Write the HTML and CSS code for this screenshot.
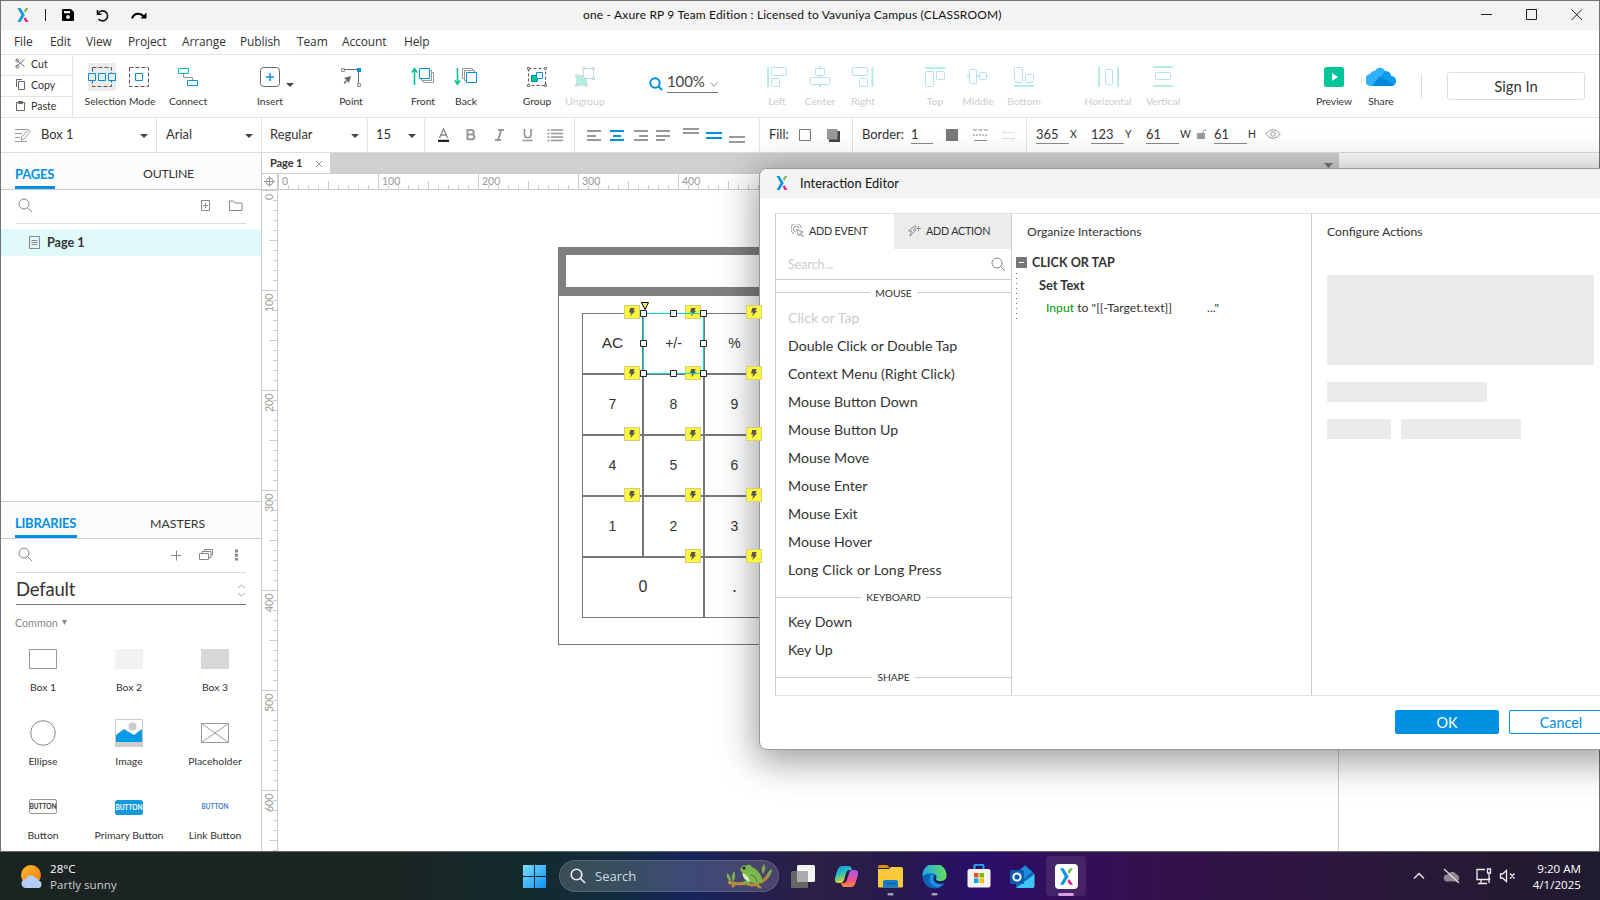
FILE: index.html
```html
<!DOCTYPE html>
<html lang="en">
<head>
<meta charset="utf-8">
<title>one - Axure RP 9 Team Edition</title>
<link rel="stylesheet" href="styles.css">
</head>
<body>
<svg class="defs" width="0" height="0">
  <symbol id="logo" viewBox="0 0 14 16"><path d="M1.5 1h3l4.3 7-4.3 7h-3l4-7z" fill="#1296db"/><path d="M12.5 1l-3.3 4.800-1.400-2L10 1z" fill="#7ab648"/><path d="M9.200 10l3.300 5H9.800L7.800 12z" fill="#ec1685"/></symbol>
  <symbol id="search" viewBox="0 0 15 15"><circle cx="6" cy="6" r="5" fill="none" stroke="currentColor"/><path d="M9.800 9.800L14 14" stroke="currentColor" fill="none"/></symbol>
  <symbol id="bolt" viewBox="0 0 16 14"><rect x=".5" y=".5" width="15" height="13" fill="#fdf63f" stroke="#d3cf7c"/><path d="M6.300 3h4.400L9.300 5.800h2L6.200 11.200l1-3.700H5z" fill="#555"/></symbol>
</svg>
<div class="app">
  <header class="titlebar">
    <svg class="t-logo" width="14" height="16"><use href="#logo"/></svg>
    <i class="t-bar"></i>
    <svg class="t-save" width="12" height="12" viewBox="0 0 12 12"><path d="M1 0h8l3 3v8a1 1 0 0 1-1 1H1a1 1 0 0 1-1-1V1a1 1 0 0 1 1-1z"/><rect x="2" y="2" width="6" height="2.300" fill="#f3f3f3"/><circle cx="6" cy="8" r="1.900" fill="#f3f3f3"/></svg>
    <svg class="t-undo" width="13" height="13" viewBox="0 0 13 13"><path d="M1.500 1v4.200h4M2 4.800A5 5 0 1 1 2.600 10" fill="none" stroke="#111" stroke-width="1.600"/></svg>
    <svg class="t-redo" width="16" height="10" viewBox="0 0 16 10"><path d="M1 8.500C3 3 9 2 13 6.500" fill="none" stroke="#000" stroke-width="2"/><path d="M15.500 2.500V8.500H9.500z"/></svg>
    <span class="t-title">one - Axure RP 9 Team Edition : Licensed to Vavuniya Campus (CLASSROOM)</span>
    <svg class="t-win" width="102" height="12" viewBox="0 0 102 12" fill="none" stroke="#222"><path d="M0 5.500h11M45.500.500h10v10h-10zM90.500.500l10.500 10.500M101 .500L90.500 11"/></svg>
  </header>
  <nav class="menubar"><span>File</span><span>Edit</span><span>View</span><span>Project</span><span>Arrange</span><span>Publish</span><span>Team</span><span>Account</span><span>Help</span></nav>

  <div class="toolbar">
    <div class="clip">
      <div><svg width="12" height="12" viewBox="0 0 12 12" fill="none" stroke="#777"><path d="M1 1.500l8.500 7M1 9l8.500-7.500"/><circle cx="2.300" cy="2.500" r="1.500"/><circle cx="2.300" cy="8.500" r="1.500"/></svg>Cut</div>
      <div><svg width="12" height="12" viewBox="0 0 12 12" fill="none" stroke="#666"><path d="M3.500 2.500h6v8h-6zM1.500 8V.500H7"/></svg>Copy</div>
      <div><svg width="12" height="12" viewBox="0 0 12 12" fill="none" stroke="#666"><path d="M1.500 2.500h8v8h-8zM3.500 1.500h4v2h-4z"/></svg>Paste</div>
    </div>
    <div class="tool sel"><div class="pair">
      <svg class="on" width="28" height="28" viewBox="0 0 28 28" fill="none"><path d="M4.500 4.500h19v19h-19z" stroke="#555" stroke-dasharray="4 2"/><path d="M.500 10.500h7v7h-7zM10.500 10.500h7v7h-7zM20.500 10.500h7v7h-7z" stroke="#0090e3" fill="#ececec"/></svg>
      <svg width="22" height="28" viewBox="0 0 22 28" fill="none"><path d="M1.500 4.500h19v19h-19z" stroke="#555" stroke-dasharray="4 2"/><path d="M7.500 10.500h7v7h-7z" stroke="#0090e3"/></svg></div><span>Selection Mode</span></div>
    <div class="tool connect"><svg width="22" height="28" viewBox="0 0 22 28" fill="none"><path d="M1.500 5.500h10v5h-10z" stroke="#00c49a"/><path d="M6.500 11v3.500h9V17" stroke="#999"/><path d="M10.500 17.500h10v5h-10z" stroke="#0090e3"/></svg><span>Connect</span></div>
    <div class="tool insert"><svg width="40" height="28" viewBox="0 0 40 28" fill="none"><rect x="10.500" y="4.500" width="19" height="19" rx="3" stroke="#666"/><path d="M20 10v8M16 14h8" stroke="#0090e3" stroke-width="1.500"/></svg><i class="caret"></i><span>Insert</span></div>
    <div class="tool point"><svg width="22" height="28" viewBox="0 0 22 28" fill="none"><path d="M4 6.500h14.500V21" stroke="#666"/><path d="M1.500 5.500h3v3h-3zM17.500 20.500h3v3h-3z" stroke="#999" fill="#ddd"/><rect x="17" y="5" width="4" height="4" fill="#0090e3"/><path d="M11 13l-2 7-2-2.200L5 21l-1.500-1.500L6.500 17 4 15z" fill="#666"/></svg><span>Point</span></div>
    <div class="tool front"><svg width="24" height="28" viewBox="0 0 24 28" fill="none"><path d="M12.500 9.500h10v10h-10z" fill="#fff" stroke="#999"/><path d="M10.500 7.500h10v10h-10z" fill="#fff" stroke="#999"/><path d="M8.500 5.500h10v10h-10z" fill="#fff" stroke="#0090e3"/><path d="M3.500 7v15M1 9.500l2.500-3.700L6 9.500" stroke="#00c49a" stroke-width="1.600"/></svg><span>Front</span></div>
    <div class="tool back"><svg width="24" height="28" viewBox="0 0 24 28" fill="none"><path d="M8.500 5.500h10v10h-10z" fill="#fff" stroke="#999"/><path d="M10.500 7.500h10v10h-10z" fill="#fff" stroke="#999"/><path d="M12.500 9.500h10v10h-10z" fill="#fff" stroke="#0090e3"/><path d="M3.500 5v15M1 17.500l2.500 3.700L6 17.500" stroke="#00c49a" stroke-width="1.600"/></svg><span>Back</span></div>
    <div class="tool group"><svg width="22" height="28" viewBox="0 0 22 28" fill="none"><path d="M2.500 5.500h17v17h-17z" stroke="#555" stroke-dasharray="3 2"/><path d="M5 12h6v6H5z" fill="#00c49a"/><path d="M5.500 12.500h6v6h-6z" stroke="#0090a0"/><path d="M10.500 9.500h6v6h-6z" fill="#fff" stroke="#0090e3"/><path d="M1.500 4.500h2v2h-2zM18.500 4.500h2v2h-2zM1.500 21.500h2v2h-2zM18.500 21.500h2v2h-2z" fill="#fff" stroke="#777"/></svg><span>Group</span></div>
    <div class="tool ungroup dim"><svg width="22" height="28" viewBox="0 0 22 28" fill="none"><path d="M2 12h11v11H2z" fill="#b3eee1"/><path d="M9.500 5.500h10v10h-10z" fill="#fff" stroke="#b3dff8"/><path d="M8.500 4.500h2v2h-2zM18.500 4.500h2v2h-2zM8.500 14.500h2v2h-2zM18.500 14.500h2v2h-2zM1.500 11.500h2v2h-2zM1.500 21.500h2v2h-2zM11.500 21.500h2v2h-2z" fill="#fff" stroke="#d2d2d2"/></svg><span>Ungroup</span></div>
    <div class="zoombox"><svg width="14" height="14" viewBox="0 0 14 14" fill="none" stroke="#0090e3" stroke-width="2"><circle cx="6" cy="6" r="4.700"/><path d="M9.500 9.500L13 13"/></svg><div class="pct">100%<svg width="8" height="5" viewBox="0 0 8 5" fill="none" stroke="#bbb" stroke-width="1.400"><path d="M.500.500L4 4 7.500.500"/></svg></div></div>
    <div class="tool left dim"><svg width="22" height="28" viewBox="0 0 22 28" fill="none" stroke="#b3dff8"><path d="M2 4v20" stroke="#b3eee1" stroke-width="2"/><rect x="5.500" y="4.500" width="15" height="8" rx="1"/><rect x="5.500" y="15.500" width="8" height="8" rx="1"/></svg><span>Left</span></div>
    <div class="tool near dim"><svg width="22" height="28" viewBox="0 0 22 28" fill="none" stroke="#b3dff8"><path d="M11 3v21" stroke="#b3eee1" stroke-width="2"/><rect x="6.500" y="5.500" width="9" height="7" rx="1" fill="#fff"/><rect x="1.500" y="14.500" width="19" height="7" rx="1" fill="#fff"/></svg><span>Center</span></div>
    <div class="tool near dim"><svg width="22" height="28" viewBox="0 0 22 28" fill="none" stroke="#b3dff8"><path d="M20.500 4v20" stroke="#b3eee1" stroke-width="2"/><rect x=".5" y="4.500" width="15" height="8" rx="1"/><rect x="7.500" y="15.500" width="8" height="8" rx="1"/></svg><span>Right</span></div>
    <div class="tool top dim"><svg width="22" height="28" viewBox="0 0 22 28" fill="none" stroke="#b3dff8"><path d="M1 5h20" stroke="#b3eee1" stroke-width="2"/><rect x="1.500" y="8.500" width="8" height="15" rx="1"/><rect x="12.500" y="8.500" width="8" height="8" rx="1"/></svg><span>Top</span></div>
    <div class="tool near dim"><svg width="22" height="28" viewBox="0 0 22 28" fill="none" stroke="#b3dff8"><path d="M0 13h21" stroke="#b3eee1" stroke-width="2"/><rect x="2.500" y="6.500" width="7" height="14" rx="1" fill="#fff"/><rect x="12.500" y="9.500" width="7" height="7" rx="1" fill="#fff"/></svg><span>Middle</span></div>
    <div class="tool bottom dim"><svg width="22" height="28" viewBox="0 0 22 28" fill="none" stroke="#b3dff8"><path d="M1 23h20" stroke="#b3eee1" stroke-width="2"/><rect x="1.500" y="4.500" width="8" height="15" rx="1"/><rect x="12.500" y="11.500" width="8" height="8" rx="1"/></svg><span>Bottom</span></div>
    <div class="tool horiz dim"><svg width="22" height="28" viewBox="0 0 22 28" fill="none" stroke="#b3dff8"><path d="M2 4v20M21 4v20" stroke="#b3eee1" stroke-width="2"/><rect x="8.500" y="6.500" width="7" height="15" rx="1"/></svg><span>Horizontal</span></div>
    <div class="tool vert dim"><svg width="22" height="28" viewBox="0 0 22 28" fill="none" stroke="#b3dff8"><path d="M1 4h20M1 23h20" stroke="#b3eee1" stroke-width="2"/><rect x="3.500" y="9.500" width="15" height="7" rx="1"/></svg><span>Vertical</span></div>
    <div class="tool preview"><svg width="20" height="28" viewBox="0 0 20 28"><rect y="4" width="20" height="20" rx="2.500" fill="#00c49a"/><path d="M8 10l6 4-6 4z" fill="#fff"/></svg><span>Preview</span></div>
    <div class="tool share"><svg width="30" height="28" viewBox="0 0 30 28"><path d="M6 23a6 6 0 0 1-2-12 5 5 0 0 1 5-3 5.500 5.500 0 0 1 10 0 5 5 0 0 1 6 5 5 5 0 0 1 0 10z" fill="#2fb1ff"/><path d="M7 23l7-9 5-5.500a5 5 0 0 1 6 4.500 5 5 0 0 1 0 10z" fill="#0d9bea"/><path d="M6 23l7.500-9.500L28.500 22q-1 1-3.500 1z" fill="#0089dc"/></svg><span>Share</span></div>
    <i class="t-div"></i>
    <div class="signin">Sign In</div>
  </div>

  <div class="format">
    <div class="f-style"><svg width="16" height="14" viewBox="0 0 16 14" fill="none" stroke="#999"><path d="M0 1.500h13M0 5.500h7M0 9.500h5M0 13.500h12M6 12l1-3.500 6.500-6.500 2 1.500L9 11z"/></svg><b>Box 1</b><i class="caret"></i></div>
    <div class="f-font"><b>Arial</b><i class="caret"></i></div>
    <div class="f-weight"><b>Regular</b><i class="caret"></i></div>
    <div class="f-size"><b>15</b><i class="caret"></i></div>
    <div class="f-text">
      <svg width="126" height="14" viewBox="0 0 126 14"><path d="M0 13h11" stroke="#222" stroke-width="2.500"/><path d="M1.500 10L5.500.800 9.500 10M3 7h5" fill="none" stroke="#888" stroke-width="1.300"/><path d="M29.500 1v11M29.500 2h4a2.200 2.200 0 0 1 0 4.500h-4 4.500a2.200 2.200 0 0 1 0 4.700h-4.500" fill="none" stroke="#999" stroke-width="2"/><path d="M60 2h6M57 12h6M63.300 2L60 12" fill="none" stroke="#999" stroke-width="2"/><path d="M86.500 1v5.500a3 3 0 0 0 6.500 0V1M84.500 12.500h10" fill="none" stroke="#999" stroke-width="1.700"/><path d="M113 2h12M113 5.500h12M113 9h12M113 12.500h12" stroke="#999" stroke-width="1.500"/><path d="M109.500 2h2M109.500 5.500h2M109.500 9h2M109.500 12.500h2" stroke="#999" stroke-width="1.500"/></svg>
    </div>
    <div class="f-align">
      <svg width="159" height="16" viewBox="0 0 159 16" fill="none" stroke="#999" stroke-width="2"><path d="M0 4h14M0 9h9M0 13h14M47 4h14M52 9h9M47 13h14M69 4h14M69 9h14M69 13h9M96 2h16M96 6h16M142 10h16M142 15h16"/><path d="M23 4h14M26 9h8M23 13h14M119 6h16M119 11h16" stroke="#0090e3"/></svg>
    </div>
    <div class="f-fill"><span>Fill:</span><svg width="42" height="13" viewBox="0 0 42 13"><path d="M.500.500h11v11H.500z" fill="#fff" stroke="#777"/><path d="M30 2h11v11H30z" fill="#444"/><path d="M28 0h10.500v10.500H28z" fill="#999"/></svg></div>
    <div class="f-border"><span>Border:</span><u class="short">1</u><svg width="70" height="14" viewBox="0 0 70 14" fill="none"><path d="M0 1h12v12H0z" fill="#777"/><path d="M27 2h15" stroke="#888" stroke-dasharray="4 1.500"/><path d="M27 7h15" stroke="#888" stroke-dasharray="2 1"/><path d="M28 12.500h13" stroke="#888"/><path d="M69 4.500H56.500l3-3M56 10.500h12.500l-3 3" stroke="#ddd"/></svg></div>
    <div class="f-pos"><u>365</u><em>X</em><u>123</u><em>Y</em><u>61</u><em class="w">W</em><svg class="lock" width="10" height="12" viewBox="0 0 10 12"><path d="M0 5h8v6H0z" fill="#999"/><path d="M6 5V3a2 2 0 0 1 3.500 0" fill="none" stroke="#999"/></svg><u>61</u><em>H</em><svg width="16" height="10" viewBox="0 0 16 10" fill="none" stroke="#999"><path d="M.700 5Q4 .600 8 .600T15.300 5Q12 9.400 8 9.400T.700 5z"/><circle cx="8" cy="5" r="2.300"/></svg></div>
  </div>

  <div class="main">
    <aside class="side">
      <section class="pages">
        <div class="tabs"><b class="t-pages">PAGES</b><span class="t-outline">OUTLINE</span></div>
        <div class="finder"><svg width="15" height="15"><use href="#search"/></svg><svg class="push" width="42" height="12" viewBox="0 0 42 12" fill="none" stroke="#888"><path d="M.500.500h8v10h-8zM4.500 3v5M2 5.500h5M28.500 1h4l1.500 2h7v7.500H28.500z"/></svg></div>
        <div class="page-row"><svg width="11" height="13" viewBox="0 0 11 13" fill="none" stroke="#888"><path d="M.500.500h10v12H.500zM2.500 4.500h6M2.500 6.500h6M2.500 8.500h6"/></svg><b>Page 1</b></div>
      </section>
      <section class="libs">
        <div class="tabs"><b class="t-libs">LIBRARIES</b><span class="t-masters">MASTERS</span></div>
        <div class="finder"><svg width="15" height="15"><use href="#search"/></svg><svg class="push2" width="68" height="12" viewBox="0 0 68 12" fill="none" stroke="#888"><path d="M0 6.500h10M5.500 1.500v10M28.500 4.500h9v6h-9zM31 4V2.500h9V8.500h-2M33.500 2V.500h8V6H40"/><path d="M65.500.500v11" stroke-width="3" stroke-dasharray="3 1.300"/></svg></div>
        <div class="lib-select"><span>Default</span><svg width="9" height="13" viewBox="0 0 9 13" fill="none" stroke="#aaa"><path d="M1 4l3.500-3L8 4M1 9l3.500 3L8 9"/></svg></div>
        <div class="common">Common <svg width="5" height="5" viewBox="0 0 5 5"><path d="M0 0h5L2.500 5z" fill="#888"/></svg></div>
        <div class="widgets">
          <div><svg width="28" height="28" viewBox="0 0 28 28"><path d="M.500 4.500h27v19H.500z" fill="#fff" stroke="#999"/></svg>Box 1</div>
          <div><svg width="28" height="28" viewBox="0 0 28 28"><path d="M0 4h28v20H0z" fill="#f2f2f2"/></svg>Box 2</div>
          <div><svg width="28" height="28" viewBox="0 0 28 28"><path d="M0 4h28v20H0z" fill="#d7d7d7"/></svg>Box 3</div>
          <div><svg width="28" height="28" viewBox="0 0 28 28"><circle cx="14" cy="14" r="12.300" fill="#fff" stroke="#888"/></svg>Ellipse</div>
          <div><svg width="28" height="28" viewBox="0 0 28 28"><path d="M.500.500h27v27H.500z" fill="#fff" stroke="#ccc"/><path d="M0 23h28v5H0z" fill="#ccc"/><circle cx="17.500" cy="7.500" r="4" fill="#ccc"/><path d="M1 16l8-6 10 6 8-6v13H1z" fill="#039be5"/></svg>Image</div>
          <div><svg width="28" height="28" viewBox="0 0 28 28"><path d="M.500 4.500h27v19H.500zM.500 4.500l27 19M27.500 4.500L.500 23.500" fill="none" stroke="#999"/></svg>Placeholder</div>
          <div><svg width="28" height="28" viewBox="0 0 28 28"><rect x=".5" y="6.500" width="27" height="14" rx="1.500" fill="#fff" stroke="#999"/><text x="14" y="16" fill="#333">BUTTON</text></svg>Button</div>
          <div><svg width="28" height="28" viewBox="0 0 28 28"><rect y="7" width="28" height="15" rx="2.500" fill="#1599da"/><text x="14" y="17" fill="#fff">BUTTON</text></svg>Primary Button</div>
          <div><svg width="28" height="28" viewBox="0 0 28 28"><text x="14" y="16" fill="#3d7fc4">BUTTON</text></svg>Link Button</div>
        </div>
      </section>
    </aside>

    <section class="work">
      <div class="tabstrip"><div class="tab"><b>Page 1</b><svg width="8" height="8" viewBox="0 0 8 8" stroke="#999"><path d="M1 1l6 6M7 1L1 7"/></svg></div><svg class="drop" width="9" height="5" viewBox="0 0 9 5"><path d="M0 0h9L4.500 5z" fill="#777"/></svg></div>
      <div class="hrow">
        <div class="corner"><svg width="11" height="11" viewBox="0 0 11 11" fill="none" stroke="#999"><circle cx="5.500" cy="5.500" r="3.500"/><path d="M5.500 0v11M0 5.500h11"/></svg></div>
        <div class="hruler"><span>0</span><span>100</span><span>200</span><span>300</span><span>400</span></div>
      </div>
      <div class="crow">
        <div class="vruler"><span>0</span><span>100</span><span>200</span><span>300</span><span>400</span><span>500</span><span>600</span></div>
        <div class="canvas">
          <div class="calc">
            <div class="display"></div>
            <div class="keys">
              <div class="ac">AC<svg><use href="#bolt"/></svg></div><div class="picked">+/-<svg><use href="#bolt"/></svg></div><div>%<svg><use href="#bolt"/></svg></div>
              <div>7<svg><use href="#bolt"/></svg></div><div>8<svg><use href="#bolt"/></svg></div><div>9<svg><use href="#bolt"/></svg></div>
              <div>4<svg><use href="#bolt"/></svg></div><div>5<svg><use href="#bolt"/></svg></div><div>6<svg><use href="#bolt"/></svg></div>
              <div>1<svg><use href="#bolt"/></svg></div><div>2<svg><use href="#bolt"/></svg></div><div>3<svg><use href="#bolt"/></svg></div>
              <div class="zero">0<svg><use href="#bolt"/></svg></div><div class="dot">.<svg><use href="#bolt"/></svg></div>
              <svg class="handles" viewBox="0 0 70 80" fill="#fff" stroke="#222"><path d="M4.500 15.500h60v60h-60z" fill="none" stroke="#00d8d8"/><path d="M1.500 12.500h6v6h-6zM31.500 12.500h6v6h-6zM61.500 12.500h6v6h-6zM1.500 42.500h6v6h-6zM61.500 42.500h6v6h-6zM1.500 72.500h6v6h-6zM31.500 72.500h6v6h-6zM61.500 72.500h6v6h-6z"/><path d="M2.500 4.500h7L6 11.500z" fill="#fdf63f" stroke="#000"/></svg>
            </div>
          </div>
        </div>
      </div>
    </section>
    <aside class="inspector"></aside>
  </div>
</div>

<div class="dialog">
  <div class="d-title"><svg width="14" height="16"><use href="#logo"/></svg><span>Interaction Editor</span></div>
  <div class="d-body">
    <div class="events">
      <div class="e-tabs">
        <div class="e-on"><svg width="13" height="13" viewBox="0 0 13 13" fill="none" stroke="#888" stroke-width=".9"><path d="M3.500 9.800A5.200 5.200 0 1 1 10.300 4M4.500 8A3 3 0 1 1 8.200 4.500M5.500 5.500l6.500 2.300-2.600 1.200 3 3-.8.800-3-3L7.500 12z"/></svg>ADD EVENT</div>
        <div class="e-off"><svg width="13" height="12" viewBox="0 0 13 12" fill="none" stroke="#888" stroke-width=".9"><path d="M6.500 1L.500 6h3l-1.500 5 6-6H5.500L8 1zM8 3.500h5M10.500 1v5"/></svg>ADD ACTION</div>
      </div>
      <div class="e-search"><span>Search...</span><svg width="15" height="15"><use href="#search"/></svg></div>
      <div class="e-head first">MOUSE</div>
      <p class="off">Click or Tap</p><p>Double Click or Double Tap</p><p>Context Menu (Right Click)</p><p>Mouse Button Down</p><p>Mouse Button Up</p><p>Mouse Move</p><p>Mouse Enter</p><p>Mouse Exit</p><p>Mouse Hover</p><p class="wide">Long Click or Long Press</p>
      <div class="e-head">KEYBOARD</div>
      <p>Key Down</p><p>Key Up</p>
      <div class="e-head">SHAPE</div>
    </div>
    <div class="organize">
      <h4>Organize Interactions</h4>
      <div class="o-event"><i></i><b>CLICK OR TAP</b></div>
      <div class="o-kids"><b>Set Text</b><div><span class="green">Input</span> to "[[-Target.text]]<span class="gap">..."</span></div></div>
    </div>
    <div class="configure">
      <h4>Configure Actions</h4>
      <div class="ph big"></div><div class="ph mid"></div><div class="ph-row"><div class="ph a"></div><div class="ph b"></div></div>
    </div>
  </div>
  <div class="d-foot"><div class="ok">OK</div><div class="cancel">Cancel</div></div>
</div>

<footer class="taskbar">
  <svg class="sun" width="24" height="25" viewBox="0 0 24 25"><defs><linearGradient id="s" x2="1" y2="1"><stop stop-color="#fcc02c"/><stop offset="1" stop-color="#f0700c"/></linearGradient></defs><circle cx="11" cy="11" r="10" fill="url(#s)"/><path d="M6 24a4.500 4.500 0 0 1 0-9 5 5 0 0 1 9-1.500 5 5 0 0 1 4 3 4 4 0 0 1 0 7.500z" fill="#b5cdf5"/></svg>
  <div class="weather"><span>28°C</span><span>Partly sunny</span></div>
  <svg class="win" width="23" height="23" viewBox="0 0 23 23"><defs><linearGradient id="w" x2="1" y2="1"><stop stop-color="#7fdcff"/><stop offset="1" stop-color="#0a91f5"/></linearGradient></defs><path d="M0 0h11v11H0zM12 0h11v11H12zM0 12h11v11H0zM12 12h11v11H12z" fill="url(#w)"/></svg>
  <div class="pill"><svg width="16" height="16" viewBox="0 0 16 16" fill="none" stroke="#eee" stroke-width="1.600"><circle cx="6.500" cy="6.500" r="5.300"/><path d="M10.500 10.500l4.500 4.500"/></svg><span>Search</span>
    <svg class="frog" width="48" height="26" viewBox="0 0 48 26"><path d="M2 19q8 3 17 1 8 4 14 0 7-3 10-9" fill="none" stroke="#b98a3c" stroke-width="3"/><path d="M29 21l6 4M10 20l-4 4" stroke="#b98a3c" stroke-width="2.500"/><path d="M1 10q4 2 4 9Q0 16 1 10zM8 8q3 5-1 11-3-5 1-11zM38 1q3 5-1 10-3-5 1-10zM46 6q0 6-5 8 0-6 5-8z" fill="#7cab4a"/><path d="M15 5q2-4 5-2 4-3 6 1 7 3 10 11 1 5-4 5-4 1-8-1l-4 3-3-1 3-4q-4-5-4-8-3-2-1-4z" fill="#7cb84c"/><path d="M17 10q6 3 7 9l-4-2q-4-3-3-7z" fill="#dce8b4"/><path d="M25 12q5 1 6 7M21 20l-3 3M33 20l4 1" stroke="#3f7f2c" fill="none"/><circle cx="18" cy="5" r="1.500" fill="#222"/></svg></div>
  <svg class="tv" width="24" height="23" viewBox="0 0 24 23"><rect y="6" width="17" height="17" rx="1.500" fill="#666"/><rect x="6" width="18" height="17" rx="1.500" fill="#f4f4f4"/><path d="M6 6h11v11H6z" fill="#aaa"/></svg>
  <svg class="cp" width="23" height="23" viewBox="0 0 23 23"><defs><linearGradient id="c1" x2=".4" y2="1"><stop stop-color="#1b8df0"/><stop offset=".5" stop-color="#27c1b8"/><stop offset="1" stop-color="#f5d22c"/></linearGradient><linearGradient id="c2" x2="0" y2="1"><stop stop-color="#a259f0"/><stop offset=".6" stop-color="#f0508e"/><stop offset="1" stop-color="#fa8f38"/></linearGradient></defs><path d="M7 1h7q2 0 3 4h-3q-2 0-3 3l-2 7q-1 3-3 3H3q-4 0-3-5l2.500-8Q4 1 7 1z" fill="url(#c1)"/><path d="M16 22H9q-2 0-3-4h3q2 0 3-3l2-7q1-3 3-3h3q4 0 3 5l-2.500 8Q19 22 16 22z" fill="url(#c2)"/></svg>
  <svg class="fe run" width="25" height="32" viewBox="0 0 25 32"><path d="M0 2q0-2 2-2h7l3 3H0z" fill="#d9920f"/><path d="M0 4h11l2-2h10q2 0 2 2v17q0 1.500-2 1.500H2Q0 22.500 0 21z" fill="#fbc93a"/><path d="M5 22.500V17q0-2 2-2h11q2 0 2 2v5.500z" fill="#117cc9"/><path d="M8 18.500h9" stroke="#075a9c"/><rect x="9.500" y="28" width="6" height="2.500" rx="1.200" fill="#a59ab8"/></svg>
  <svg class="ed run" width="25" height="32" viewBox="0 0 25 32"><defs><linearGradient id="e" x2="1"><stop stop-color="#1fa7e8"/><stop offset="1" stop-color="#66e05a"/></linearGradient></defs><circle cx="12.500" cy="11.500" r="12" fill="#0d62b8"/><path d="M.500 11A12 12 0 0 1 24.500 10q0 6-6 6.500-6 0-4-3 1-4-3-5-6-1-11 2.500z" fill="url(#e)"/><path d="M9 9q-4 7 2 12 6 3 11-2-3 1-7 0-6-3-3-9z" fill="#1b91e2"/><path d="M13 10q-3 5 2 8 5 2 9-1l.500-4q-3 4-8 3-4-1-2.500-4z" fill="#24104f"/><rect x="9.500" y="28" width="6" height="2.500" rx="1.200" fill="#a59ab8"/></svg>
  <svg class="st" width="24" height="24" viewBox="0 0 24 24"><path d="M7.500 6V2q0-1.200 1.200-1.200h6.600q1.200 0 1.200 1.200v4" fill="none" stroke="#2aa7e8" stroke-width="2"/><rect x=".5" y="5" width="23" height="18.500" rx="2" fill="#f2f2f5"/><path d="M7 9h4.500v4.500H7z" fill="#f25022"/><path d="M12.500 9H17v4.500h-4.500z" fill="#7fba00"/><path d="M7 14.500h4.500V19H7z" fill="#00a4ef"/><path d="M12.500 14.500H17V19h-4.500z" fill="#ffb900"/></svg>
  <svg class="ol" width="25" height="24" viewBox="0 0 25 24"><path d="M6 8l9-8 9 8v13q0 2-2 2H8q-2 0-2-2z" fill="#1066b5"/><path d="M8 7l7-6 7 6-8 7z" fill="#1d8de0"/><path d="M6 23l18.500-14v12q0 2-2 2z" fill="#40c4f4"/><rect y="5" width="14" height="14" rx="1.500" fill="#0d5cb0"/><circle cx="7" cy="12" r="3.600" fill="none" stroke="#fff" stroke-width="2"/></svg>
  <div class="ax"><svg width="23" height="25" viewBox="0 0 23 25"><rect width="23" height="25" rx="4" fill="#fff"/><svg x="3" y="3" width="17" height="19"><use href="#logo"/></svg></svg><i></i></div>
  <svg class="tray" width="102" height="20" viewBox="0 0 102 20" fill="none" stroke="#eee" stroke-width="1.300"><path d="M1 12.500l5-5 5 5"/><path d="M34 15.500a3.500 3.500 0 0 1 .500-7 5 5 0 0 1 8.500-.500 4 4 0 0 1 1 7.500z" fill="#8d8796" stroke="none"/><path d="M31 3l15 14" stroke="#ddd"/><path d="M72 3.500h-8v10h12.500V12M68 14v3M65 17.500h9M74.500 3h3v4h-3zM76 7v10"/><path d="M87.500 8h2l4-3.500v11L89.500 12h-2zM97 7.500l4.500 5M101.500 7.500l-4.500 5"/></svg>
  <div class="clock"><span>9:20 AM</span><span>4/1/2025</span></div>
</footer>
</body>
</html>
```
FILE: styles.css
```css
* { box-sizing: border-box; }
body { margin: 0; width: 1600px; height: 900px; overflow: hidden; position: relative; background: #fff; color: #333; font-family: Lato, "Open Sans", sans-serif; font-size: 12px; }
svg { display: block; flex: none; }
b, em, i, u { font-style: normal; text-decoration: none; }
.defs { position: absolute; }

.app { height: 851px; border: 1px solid #757277; border-bottom: 0; background: #fff; }

.titlebar { height: 29px; background: #f3f3f3; display: flex; align-items: center; padding: 0 0 1px 15px; white-space: nowrap; }
.t-bar { width: 1px; height: 12px; background: #222; margin-left: 15px; }
.t-save { margin-left: 16px; }
.t-undo { margin-left: 22px; }
.t-redo { margin-left: 22px; }
.t-title { margin-left: 436px; width: 420px; color: #111; letter-spacing: .17px; margin-top: -1px; }
.t-win { margin-left: 478px; }

.menubar { height: 25px; border-bottom: 1px solid #e3e3e3; font: 12px/24px "Open Sans", sans-serif; color: #333; display: grid; grid-template-columns: 36px 36px 42px 54px 58px 57px 45px 62px 40px; padding-left: 13px; letter-spacing: -.12px; }

.caret { display: block; width: 0; height: 0; border: 4px solid transparent; border-top: 4px solid #444; border-bottom: 0; }
.toolbar { height: 63px; border-bottom: 1px solid #e3e3e3; display: flex; }
.clip { width: 72px; border-right: 1px solid #e3e3e3; display: grid; grid-template-rows: 21px 21px 20px; font-size: 10.600px; }
.clip div { display: flex; align-items: center; gap: 4px; padding: 0 0 2px 14px; border-bottom: 1px solid #e3e3e3; }
.clip div:last-child { border: 0; }
.tool { position: relative; width: 40px; padding-top: 8px; display: flex; flex-direction: column; align-items: center; font-size: 10.300px; line-height: 14px; white-space: nowrap; flex: none; }
.tool span { margin-top: 3px; }
.dim { color: #ccc; }
.sel { width: 70px; margin-left: 12px; }
.pair { display: flex; gap: 12px; margin-left: -2px; }
.on { background: #ececec; }
.connect { margin-left: 13px; }
.insert { margin-left: 42px; }
.insert .caret { position: absolute; left: 36px; top: 28px; }
.point { margin-left: 41px; }
.front { margin-left: 32px; }
.back { margin-left: 3px; }
.group { margin-left: 31px; }
.ungroup { margin-left: 8px; }
.zoombox { margin-left: 44px; width: 70px; display: flex; align-items: flex-start; gap: 4px; padding-top: 15px; }
.zoombox > svg { margin-top: 7px; }
.pct { width: 51px; height: 23px; border-bottom: 1px solid #777; font-size: 15px; line-height: 22px; display: flex; align-items: center; justify-content: space-between; color: #444; letter-spacing: -.1px; }
.pct svg { margin-top: 7px; }
.left { margin-left: 38px; }
.near { margin-left: 3px; }
.top { margin-left: 32px; }
.bottom { margin-left: 6px; }
.horiz { margin-left: 41px; width: 46px; }
.vert { margin-left: 12px; }
.preview { margin-left: 131px; }
.share { margin-left: 7px; }
.t-div { width: 1px; height: 24px; background: #ddd; margin: 19px 0 0 20px; }
.signin { margin: 17px 0 0 25px; width: 138px; height: 28px; border: 1px solid #ddd; border-radius: 3px; font-size: 14.800px; line-height: 26px; text-align: center; }

.format { height: 35px; border-bottom: 1px solid #dcdcdc; display: flex; font-size: 12.900px; }
.format > div { display: flex; align-items: center; border-right: 1px solid #e3e3e3; flex: none; padding-bottom: 3px; }
.format > .f-text, .format > .f-align { padding-bottom: 1px; }
.format b { font-weight: 400; }
.format .caret { margin-left: auto; margin-right: 8px; margin-top: 5px; }
.f-style { width: 156px; padding-left: 14px; }
.f-style svg { margin-top: 2px; }
.f-style b { margin-left: 10px; }
.f-font { width: 105px; padding-left: 9px; }
.f-weight { width: 106px; padding-left: 8px; }
.f-size { width: 57px; padding-left: 8px; }
.f-text { width: 150px; padding-left: 13px; }
.f-align { width: 185px; padding-left: 12px; }
.f-fill { width: 93px; padding-left: 9px; }
.f-fill svg { margin: 3px 11px 0 auto; }
.f-border { width: 174px; padding-left: 9px; }
.f-border svg { margin: 2px 0 0 13px; }
.format u { width: 33px; height: 18px; margin-top: 3px; line-height: 16px; border-bottom: 1px solid #888; }
.format .short { width: 22px; margin-left: 7px; }
.format .f-pos { border: 0; padding-left: 9px; }
.f-pos em { font-size: 10.500px; width: 22px; padding-left: 1px; }
.f-pos .w { width: 18px; }
.f-pos .lock { margin-right: 7px; }
.f-pos em:nth-of-type(4) { width: 18px; }

.main { height: 698px; display: flex; }
.side { width: 261px; border-right: 1px solid #ccc; }
.pages { height: 348px; }
.libs { border-top: 1px solid #ccc; }
.tabs { height: 37px; background: #fcfcfc; border-bottom: 1px solid #ccc; display: flex; font-size: 12.300px; padding-left: 14px; }
.tabs b { height: 36px; border-bottom: 3px solid #0090e3; color: #0090e3; line-height: 40px; padding-top: 1px; white-space: nowrap; font-size: 13px; }
.tabs span { line-height: 42px; }
.libs .tabs span { line-height: 43px; }
.t-pages { width: 40px; letter-spacing: -.2px; }
.t-outline { margin-left: 88px; letter-spacing: -.2px; }
.t-libs { width: 62px; letter-spacing: -.25px; }
.t-masters { margin-left: 73px; }
.finder { height: 34px; margin: 0 15px; border-bottom: 1px solid #ddd; display: flex; align-items: center; padding: 0 0 2px 2px; color: #888; }
.push { margin-left: 168px; }
.push2 { margin-left: 138px; }
.page-row { height: 27px; margin-top: 5px; background: #e0f9f9; display: flex; align-items: center; padding-left: 28px; gap: 7px; font-size: 12.600px; }
.lib-select { height: 32px; margin: 0 15px; border-bottom: 1px solid #777; display: flex; align-items: center; justify-content: space-between; font-size: 18.500px; letter-spacing: -.2px; padding-top: 3px; }
.lib-select span { margin-top: -2px; }
.common { display: flex; align-items: center; gap: 4px; color: #888; font-size: 10.700px; margin-left: 14px; height: 34px; }
.widgets { display: grid; grid-template-columns: 86px 86px 86px; grid-auto-rows: 74px; padding-top: 6px; height: 212px; margin-left: -1px; }
.widgets div { display: flex; flex-direction: column; align-items: center; gap: 6px; font-size: 10.400px; line-height: 16px; white-space: nowrap; }
.widgets text { font: 700 6.500px Lato, sans-serif; text-anchor: middle; }

.work { width: 1077px; border-right: 1px solid #ccc; display: flex; flex-direction: column; }
.tabstrip { height: 20px; background: #d0d0d0; display: flex; justify-content: space-between; }
.tab { width: 68px; background: #fff; display: flex; align-items: center; justify-content: space-between; padding: 0 7px 0 8px; font-size: 11px; }
.tab b { margin-top: -2px; letter-spacing: -.1px; }
.tab svg { margin-top: 2px; }
.drop { margin: 10px 5px 0 0; }
.hrow { height: 17px; border-top: 1px solid #ccc; border-bottom: 1px solid #ccc; display: flex; }
.corner { width: 16px; border-right: 1px solid #ccc; padding: 2px; }
.hruler { flex: 1; display: flex; color: #999; font-size: 10.500px; line-height: 15px; overflow: hidden;
  background:
    repeating-linear-gradient(90deg, #ccc 0 1px, transparent 1px 100px) 0 0 / 100% 15px no-repeat,
    repeating-linear-gradient(90deg, #ccc 0 1px, transparent 1px 50px) 0 7px / 100% 8px no-repeat,
    repeating-linear-gradient(90deg, #ccc 0 1px, transparent 1px 10px) 0 11px / 100% 4px no-repeat; }
.hruler span { width: 100px; padding-left: 4px; }
.crow { flex: 1; display: flex; min-height: 0; }
.vruler { width: 16px; border-right: 1px solid #ccc; color: #999; font-size: 10.500px; line-height: 15px; overflow: hidden;
  background:
    repeating-linear-gradient(180deg, #ccc 0 1px, transparent 1px 100px) 0 0 / 15px 100% no-repeat,
    repeating-linear-gradient(180deg, #ccc 0 1px, transparent 1px 50px) 7px 0 / 8px 100% no-repeat,
    repeating-linear-gradient(180deg, #ccc 0 1px, transparent 1px 10px) 11px 0 / 4px 100% no-repeat; }
.vruler span { display: block; height: 100px; width: 15px; writing-mode: vertical-rl; transform: rotate(180deg); text-align: right; padding-bottom: 4px; }
.canvas { flex: 1; padding: 57px 0 0 280px; }
.calc { width: 310px; height: 398px; border: 1px solid #777; border-top: 0; font-family: "Liberation Sans", Arial, sans-serif; }
.display { height: 49px; margin-left: -1px; border: 8px solid #7f7f7f; border-bottom-width: 9px; }
.keys { position: relative; display: grid; grid-template-columns: 61px 61px 61px; grid-auto-rows: 61px; margin: 17px 0 0 23px; font-size: 14px; }
.keys div { position: relative; border: 1px solid #777; display: flex; align-items: center; justify-content: center; padding-bottom: 2px; }
.keys div svg { position: absolute; right: 2px; top: -9px; width: 16px; height: 14px; z-index: 1; }
.keys .ac { font-size: 15.500px; }
.keys .zero { grid-column: span 2; font-size: 16px; }
.keys .dot { font-size: 18px; }
.handles { position: absolute; left: 57px; top: -15px; width: 70px; height: 80px; z-index: 2; }
.inspector { flex: 1; background: linear-gradient(#fcfcfc 36px, #fff 36px); }

.dialog { position: absolute; left: 759px; top: 168px; width: 871px; height: 582px; border: 1px solid #999; border-radius: 8px; background: #fff; box-shadow: 0 8px 36px 4px rgba(0,0,0,.38); overflow: hidden; }
.d-title { height: 29px; background: #f3f3f3; display: flex; align-items: center; padding: 0 0 1px 15px; gap: 11px; color: #111; font-size: 12.900px; }
.d-title span { margin-top: -1px; }
.d-body { margin: 15px 0 0 15px; height: 483px; border: 1px solid #e0e0e0; border-left-color: #ccc; display: grid; grid-template-columns: 236px 300px 1fr; }
.events { border-right: 1px solid #ccc; overflow: hidden; }
.e-tabs { display: grid; grid-template-columns: 118px 117px; height: 35px; font-size: 10.800px; letter-spacing: -.25px; }
.e-tabs div { display: flex; align-items: center; gap: 5px; padding: 0 0 2px 15px; }
.e-tabs .e-off { background: #ececec; padding-left: 14px; }
.e-search { height: 31px; border-bottom: 1px solid #ccc; display: flex; justify-content: space-between; align-items: center; padding: 0 5px 0 12px; font-size: 12.400px; color: #ccc; }
.e-search svg { color: #888; }
.e-head { height: 24px; display: flex; align-items: center; gap: 5px; font-size: 10.300px; letter-spacing: -.1px; }
.e-head::before, .e-head::after { content: ""; flex: 1; height: 1px; background: #ccc; }
.e-head.first { height: 25px; }
.events p { margin: 0 0 0 12px; height: 28px; font-size: 14.150px; line-height: 26px; }
.events .wide { letter-spacing: .14px; }
.events .off { color: #ccc; }
.organize { border-right: 1px solid #ccc; }
h4 { margin: 0; font-weight: 400; font-size: 12.200px; line-height: 34px; padding: 1px 0 0 15px; height: 34px; }
.o-event { display: flex; align-items: center; gap: 5px; padding-left: 4px; font-size: 12.600px; height: 24px; margin-top: 2px; }
.o-event i { width: 11px; height: 11px; background: linear-gradient(#fff, #fff) center / 5px 1px no-repeat #777; }
.o-kids { margin-left: 4px; height: 50px; background: repeating-linear-gradient(#777 0 1px, transparent 1px 5px) 0 0 / 1px 100% no-repeat; margin-top: -1px; padding-left: 23px; font-size: 12.800px; }
.o-kids b { display: block; line-height: 24px; }
.o-kids div { padding-left: 7px; font-size: 12.200px; line-height: 22px; }
.green { color: #090; }
.gap { margin-left: 35px; }
.ph { background: #ebebeb; height: 20px; }
.configure > .ph, .ph-row { margin-left: 15px; margin-top: 17px; }
.configure .big { width: 267px; height: 90px; margin-top: 27px; }
.mid { width: 160px; }
.ph-row { display: flex; gap: 10px; }
.a { width: 64px; }
.b { width: 120px; }
.d-foot { display: flex; gap: 10px; margin: 14px 0 0 635px; text-align: center; font-size: 14.400px; line-height: 25px; }
.ok { width: 104px; height: 24px; background: #0090e3; color: #fff; border-radius: 2px; }
.cancel { width: 104px; height: 24px; border: 1px solid #0090e3; color: #0090e3; border-radius: 2px; line-height: 23px; }

.taskbar { position: relative; height: 49px; border-top: 1px solid #666; display: flex; align-items: flex-start; color: #fff; font: 11.600px/16px "Open Sans", sans-serif; background: linear-gradient(90deg, #1c2423 0, #1b2524 400px, #132a2c 520px, #122c40 620px, #17255c 690px, #252050 760px, #2b2044 810px, #271a4e 900px, #2a0e6a 980px, #330f5c 1050px, #33124a 1180px, #2a1939 1400px, #1f1a2e 1600px); }
.sun { margin: 12px 0 0 20px; }
.weather { margin: 9px 0 0 6px; width: 473px; display: flex; flex-direction: column; }
.weather span + span { color: #ccc; }
.win { margin-top: 13px; }
.pill { margin: 8px 0 0 13px; width: 220px; height: 32px; border-radius: 16px; background: rgba(255,255,255,.17); border: 1px solid rgba(255,255,255,.12); display: flex; align-items: center; padding-left: 10px; gap: 9px; font-size: 13px; color: #d4d8e0; }
.frog { margin-left: auto; margin-right: 4px; }
.tv { margin: 13px 0 0 12px; }
.cp { margin: 13px 0 0 20px; }
.fe { margin: 13px 0 0 20px; }
.ed { margin: 13px 0 0 19px; }
.st { margin: 12px 0 0 20px; }
.ol { margin: 13px 0 0 19px; }
.ax { margin: 4px 0 0 11px; width: 40px; height: 40px; border-radius: 4px; background: rgba(255,255,255,.09); display: flex; flex-direction: column; align-items: center; padding-top: 8px; gap: 4px; }
.ax i { width: 16px; height: 3px; border-radius: 2px; background: #dc9ce0; }
.tray { margin: 14px 0 0 327px; }
.clock { margin: 9px 19px 0 auto; text-align: right; display: flex; flex-direction: column; }
```
